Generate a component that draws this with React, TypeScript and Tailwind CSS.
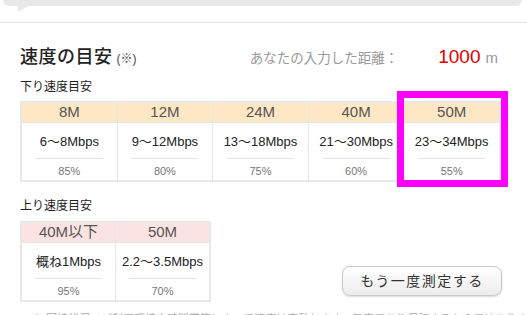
import React from "react";

interface SpeedCol {
  plan: string;
  speed: string;
  rate: string;
}

const downCols: SpeedCol[] = [
  { plan: "8M", speed: "6〜8Mbps", rate: "85%" },
  { plan: "12M", speed: "9〜12Mbps", rate: "80%" },
  { plan: "24M", speed: "13〜18Mbps", rate: "75%" },
  { plan: "40M", speed: "21〜30Mbps", rate: "60%" },
  { plan: "50M", speed: "23〜34Mbps", rate: "55%" },
];

const upCols: SpeedCol[] = [
  { plan: "40M以下", speed: "概ね1Mbps", rate: "95%" },
  { plan: "50M", speed: "2.2〜3.5Mbps", rate: "70%" },
];

const SpeedTable = ({ cols, headBg, width }: { cols: SpeedCol[]; headBg: string; width: string }) => {
  return (
    <div className={`flex border-2 border-[#e8e8e8] ${width}`}>
      {cols.map((c, i) => (
        <div key={i} className={`flex-1 flex flex-col ${i > 0 ? "border-l border-[#e6e6e6]" : ""}`}>
          <div className={`h-[19px] flex items-center justify-center text-[15px] text-[#555] ${headBg}`}>
            {c.plan}
          </div>
          <div className="h-[58px] border-t border-[#e6e6e6] flex flex-col items-center pt-[11px]">
            <div className="text-[13px] leading-[16px] text-[#222]">{c.speed}</div>
            <div className="w-[67px] h-px bg-[#e3e3e3] mt-[8px]" />
            <div className="text-[11px] leading-[14px] text-[#777] mt-[5px]">{c.rate}</div>
          </div>
        </div>
      ))}
    </div>
  );
};

const App = () => {
  return (
    <div className="relative w-[527px] h-[315px] overflow-hidden bg-white font-['Liberation_Sans','Noto_Sans_CJK_JP',sans-serif]">
      {/* bubble bottom */}
      <div className="ml-[3px] mr-[5px] h-[6px] bg-[#e8e8e8] rounded-b-[6px]" />
      <div className="ml-[18px] h-[6px]">
        <svg width="10" height="6" viewBox="0 0 10 6">
          <polygon points="0,0 10,0 0,6" fill="#e8e8e8" />
        </svg>
      </div>
      <div className="mt-[10px] h-px bg-[#e3e3e3]" />

      <div className="pl-[20px] pr-[25px]">
        <div className="mt-[20px] h-[28px] flex items-center justify-between pr-[4px]">
          <div className="flex items-baseline">
            <span className="text-[18px] text-[#222] font-medium tracking-[0.5px]">速度の目安</span>
            <span className="ml-[4px] text-[12px] text-[#444]">(※)</span>
          </div>
          <div className="flex items-baseline">
            <span className="text-[13.5px] text-[#999]">あなたの入力した距離：</span>
            <span className="ml-[40px] text-[19px] text-[#e60000]">1000</span>
            <span className="ml-[5px] text-[15px] text-[#999]">m</span>
          </div>
        </div>

        <div className="mt-[8px] text-[12px] leading-[16px] text-[#222]">下り速度目安</div>
        <div className="mt-[6px]">
          <SpeedTable cols={downCols} headBg="bg-[#fde7c4]" width="w-[481px]" />
        </div>

        <div className="flex items-end justify-between">
          <div>
            <div className="mt-[16px] text-[12px] leading-[16px] text-[#222]">上り速度目安</div>
            <div className="mt-[7px]">
              <SpeedTable cols={upCols} headBg="bg-[#fce3e3]" width="w-[191px]" />
            </div>
          </div>
          <button className="mb-[6px] w-[160px] h-[30px] rounded-[8px] border border-[#c9c9c9] bg-linear-to-b from-white to-[#ececec] shadow-[0_1px_2px_rgba(0,0,0,0.15)] text-[14px] tracking-[1.5px] text-[#333]">
            もう一度測定する
          </button>
        </div>

        <div className="mt-[10px] pl-[12px] text-[11px] leading-[14px] text-[#aaa] whitespace-nowrap">
          ※ 回線状況、ご利用環境や時間帯等によって速度は変動します。目安であり保証するものではありません。
        </div>
      </div>

      {/* highlight */}
      <div className="absolute left-[397px] top-[91px] w-[111px] h-[96px] border-[7px] border-[#ff00ff]" />
    </div>
  );
};

export default App;
